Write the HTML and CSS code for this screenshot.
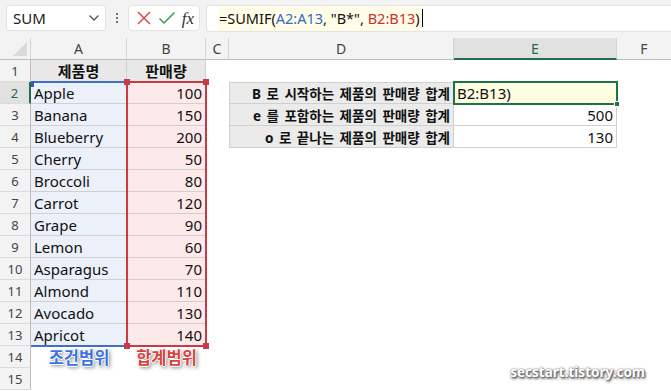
FILE: index.html
```html
<!DOCTYPE html>
<html lang="ko">
<head>
<meta charset="utf-8">
<link rel="stylesheet" href="styles.css">
</head>
<body>
<div class="app">
  <div class="toolbar">
    <div class="namebox"><span class="nb-text">SUM</span>
      <svg class="chev" width="12" height="8" viewBox="0 0 12 8"><polyline points="1.5,1.5 6,6 10.5,1.5" fill="none" stroke="#555" stroke-width="1.3"/></svg>
    </div>
    <div class="dots"><span></span><span></span><span></span></div>
    <div class="fxbox">
      <svg width="16" height="16" viewBox="0 0 16 16"><path d="M2 2 L14 14 M14 2 L2 14" stroke="#e0464a" stroke-width="1.5" fill="none"/></svg>
      <svg width="18" height="16" viewBox="0 0 18 16"><polyline points="1.5,8.5 6,13 16.5,2.5" stroke="#3a9a4a" stroke-width="1.5" fill="none"/></svg>
      <span class="fx">fx</span>
    </div>
    <div class="formula"><span class="ftext">=SUMIF(<span class="rb">A2:A13</span>, "B*", <span class="rr">B2:B13</span>)</span><span class="caret"></span></div>
  </div>
  <div class="sheet">
    <div class="corner"><span class="tri"></span></div>
    <div class="ch">A</div>
    <div class="ch">B</div>
    <div class="ch">C</div>
    <div class="ch">D</div>
    <div class="ch sel">E</div>
    <div class="ch last">F</div>

    <div class="rh">1</div>
    <div class="c hd">제품명</div>
    <div class="c hd">판매량</div>
    <div class="e"></div><div class="e"></div><div class="e"></div><div class="e"></div>

    <div class="rh rsel">2</div>
    <div class="c ca">Apple</div><div class="c cb">100</div>
    <div class="e"></div>
    <div class="d lbl top">B 로 시작하는 제품의 판매량 합계</div>
    <div class="d val top active">B2:B13)</div>
    <div class="e"></div>

    <div class="rh">3</div>
    <div class="c ca">Banana</div><div class="c cb">150</div>
    <div class="e"></div>
    <div class="d lbl">e 를 포함하는 제품의 판매량 합계</div>
    <div class="d val num">500</div>
    <div class="e"></div>

    <div class="rh">4</div>
    <div class="c ca">Blueberry</div><div class="c cb">200</div>
    <div class="e"></div>
    <div class="d lbl">o 로 끝나는 제품의 판매량 합계</div>
    <div class="d val num">130</div>
    <div class="e"></div>

    <div class="rh">5</div><div class="c ca">Cherry</div><div class="c cb">50</div><div class="e"></div><div class="e"></div><div class="e"></div><div class="e"></div>
    <div class="rh">6</div><div class="c ca">Broccoli</div><div class="c cb">80</div><div class="e"></div><div class="e"></div><div class="e"></div><div class="e"></div>
    <div class="rh">7</div><div class="c ca">Carrot</div><div class="c cb">120</div><div class="e"></div><div class="e"></div><div class="e"></div><div class="e"></div>
    <div class="rh">8</div><div class="c ca">Grape</div><div class="c cb">90</div><div class="e"></div><div class="e"></div><div class="e"></div><div class="e"></div>
    <div class="rh">9</div><div class="c ca">Lemon</div><div class="c cb">60</div><div class="e"></div><div class="e"></div><div class="e"></div><div class="e"></div>
    <div class="rh">10</div><div class="c ca">Asparagus</div><div class="c cb">70</div><div class="e"></div><div class="e"></div><div class="e"></div><div class="e"></div>
    <div class="rh">11</div><div class="c ca">Almond</div><div class="c cb">110</div><div class="e"></div><div class="e"></div><div class="e"></div><div class="e"></div>
    <div class="rh">12</div><div class="c ca">Avocado</div><div class="c cb">130</div><div class="e"></div><div class="e"></div><div class="e"></div><div class="e"></div>
    <div class="rh">13</div><div class="c ca">Apricot</div><div class="c cb">140</div><div class="e"></div><div class="e"></div><div class="e"></div><div class="e"></div>
    <div class="rh">14</div><div class="tag blue">조건범위</div><div class="tag red">합계범위</div><div class="e"></div><div class="e"></div><div class="e"></div><div class="e"></div>
    <div class="rh">15</div><div class="e"></div><div class="e"></div><div class="e"></div><div class="e"></div><div class="e"></div><div class="e"></div>

    <div class="rng-blue"><i class="h tl"></i></div>
    <div class="rng-red"><i class="h tl"></i><i class="h tr"></i><i class="h bl"></i><i class="h br"></i></div>
    <div class="act"><i class="fill"></i></div>
    <div class="mark">secstart.tistory.com</div>
  </div>
</div>
</body>
</html>
```
FILE: styles.css
```css
* { box-sizing: border-box; }
html, body { margin: 0; padding: 0; }
body {
  width: 671px; height: 391px; overflow: hidden;
  background: #fff;
  font-family: "Noto Sans", "Noto Sans CJK KR", sans-serif;
  color: #111;
}
.app { display: flex; flex-direction: column; height: 391px; }
.toolbar {
  height: 38px; flex: none; background: #f3f3f3;
  display: flex; align-items: flex-start; padding: 5px 0 0 6px; gap: 0;
}
.namebox {
  width: 100px; height: 26px; background: #fff; border: 1px solid #e3e3e3; border-radius: 4px;
  display: flex; align-items: center; justify-content: space-between; padding: 0 5px 0 6px;
  font-size: 15px; color: #222;
}
.dots { width: 22px; height: 26px; display: flex; flex-direction: column; align-items: center; justify-content: center; gap: 2px; }
.dots span { width: 2px; height: 2px; background: #444; border-radius: 1px; }
.fxbox {
  width: 72px; height: 26px; background: #fff; border: 1px solid #e3e3e3; border-radius: 4px;
  display: flex; align-items: center; justify-content: space-between; padding: 0 5px 0 7px;
}
.fx { font-family: "Liberation Serif", serif; font-style: italic; font-size: 17px; color: #333; line-height: 1; }
.formula {
  flex: 1; height: 27px; margin-left: 6px; background: #fff; border: 1px solid #e3e3e3; border-right: none;
  border-radius: 4px 0 0 4px; padding-left: 11px; display: flex; align-items: stretch;
}
.ftext { background: #fffde8; font-size: 14.5px; line-height: 25px; color: #111; padding: 0 2px 0 1px; }
.rb { color: #2f6cc6; }
.rr { color: #c8332d; }
.caret { width: 1px; background: #000; margin: 3px 0 4px 0; }

.sheet {
  position: relative;
  display: grid;
  grid-template-columns: 31px 96px 79px 23px 225px 163px 1fr;
  grid-template-rows: repeat(16, 22px);
  background: #fff;
}
.corner { background: #f3f3f3; border-right: 1px solid #d4d4d4; border-bottom: 1px solid #bdbdbd; position: relative; }
.tri { position: absolute; right: 3px; bottom: 3px; width: 0; height: 0; border-left: 14px solid transparent; border-bottom: 14px solid #dadada; }
.ch {
  background: #f3f3f3; border-right: 1px solid #d4d4d4; border-bottom: 1px solid #bdbdbd;
  font-size: 14px; color: #444; display: flex; align-items: center; justify-content: center;
}
.ch.sel { background: #e1e1e1; border-bottom: 2px solid #1e7145; color: #1e6b41; }
.ch.last { border-right: none; }
.rh {
  background: #f3f3f3; border-right: 1px solid #bdbdbd; border-bottom: 1px solid #dcdcdc;
  font-size: 13px; color: #444; display: flex; align-items: center; justify-content: center;
}
.rh.rsel { background: #e1e1e1; border-right: 2px solid #1e7145; color: #1e6b41; }
.c {
  border-right: 1px solid #d0d0d0; border-bottom: 1px solid #d0d0d0;
  font-size: 15px; display: flex; align-items: center; padding: 0 3px; white-space: nowrap;
}
.c.hd { background: #e8e8e8; font-weight: 700; justify-content: center; font-size: 15px; }
.c.ca { background: #ebf0f9; }
.c.cb { background: #fce9e9; justify-content: flex-end; }
.d {
  border-right: 1px solid #d0d0d0; border-bottom: 1px solid #d0d0d0;
  display: flex; align-items: center; white-space: nowrap; padding: 0 3px;
}
.d.top { border-top: 1px solid #d0d0d0; }
.d.lbl { background: #ebebeb; border-left: 1px solid #d0d0d0; font-weight: 700; font-size: 13.5px; justify-content: flex-end; word-spacing: 2px; }
.d.val { font-size: 15px; }
.d.num { justify-content: flex-end; }
.d.active { background: #fffde1; }

.rng-blue, .rng-red, .act { position: absolute; pointer-events: none; }
.rng-blue { grid-column: 2 / 3; grid-row: 3 / 15; top: -1px; bottom: -1px; left: 0; right: 0; border-top: 2px solid #3f70c8; border-bottom: 2px solid #3f70c8; }
.rng-red { grid-column: 3 / 4; grid-row: 3 / 15; top: -1px; bottom: -1px; left: -1px; right: -1px; border: 2px solid #c83a44; }
.h { position: absolute; width: 6px; height: 6px; background: #c83a44; }
.rng-blue .h { background: #2d5fb5; width: 3px; height: 6px; }
.h.tl { left: -4px; top: -4px; }
.h.tr { right: -4px; top: -4px; }
.h.bl { left: -4px; bottom: -4px; }
.h.br { right: -4px; bottom: -4px; }
.rng-blue .h.tl { left: 0; top: -2px; }
.act { grid-column: 6 / 7; grid-row: 3 / 4; top: -1px; bottom: -1px; left: -1px; right: -1px; border: 2px solid #1f7246; }
.fill { position: absolute; right: -4px; bottom: -4px; width: 6px; height: 6px; background: #1f7246; border: 1px solid #fff; }

.tag {
  display: flex; align-items: center; justify-content: center;
  font-size: 16.5px; font-weight: 700;
}
.tag.blue { color: #3b74e0; text-shadow: 1px 0 #fff, -1px 0 #fff, 0 1px #fff, 0 -1px #fff, 1px 1px 3px #8a8a8a, 2px 2px 4px #9a9a9a; }
.tag.red { color: #d6443f; text-shadow: 1px 0 #fff, -1px 0 #fff, 0 1px #fff, 0 -1px #fff, 1px 1px 3px #8a8a8a, 2px 2px 4px #9a9a9a; }
.mark {
  position: absolute; right: 26px; bottom: 9px;
  font-size: 13.5px; font-weight: 700; color: #fff;
  text-shadow: 0 0 2px #666, 1px 1px 2px #555, 1px 2px 3px #888;
}
```
